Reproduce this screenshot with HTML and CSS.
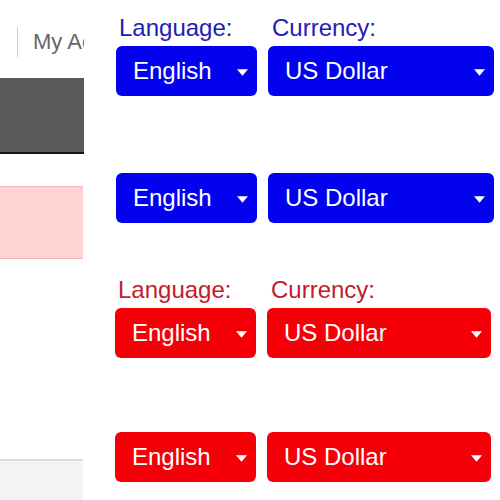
FILE: index.html
```html
<!DOCTYPE html>
<html lang="en">
<head>
    <meta charset="UTF-8">
    <meta name="viewport" content="width=device-width, initial-scale=1.0">
    <title>Language and Currency</title>
    <link rel="stylesheet" href="styles.css">
</head>
<body>

    <div class="sidebar">
        <div class="sidebar-header">
            <span class="divider"></span>
            <span class="account">My Account</span>
        </div>
        <div class="banner"></div>
        <div class="alert"></div>
        <div class="footer"></div>
    </div>

    <div class="settings">
        <!-- Blue theme, with labels -->
        <div class="group theme-blue">
            <div class="row labels">
                <span class="label">Language:</span>
                <span class="label">Currency:</span>
            </div>
            <div class="row">
                <div class="select lang"><span>English</span><svg class="arrow" viewBox="0 0 10 6"><polygon points="0,0 10,0 5,6"/></svg></div>
                <div class="select curr"><span>US Dollar</span><svg class="arrow" viewBox="0 0 10 6"><polygon points="0,0 10,0 5,6"/></svg></div>
            </div>
        </div>

        <!-- Blue theme, no labels -->
        <div class="group theme-blue no-labels">
            <div class="row">
                <div class="select lang"><span>English</span><svg class="arrow" viewBox="0 0 10 6"><polygon points="0,0 10,0 5,6"/></svg></div>
                <div class="select curr"><span>US Dollar</span><svg class="arrow" viewBox="0 0 10 6"><polygon points="0,0 10,0 5,6"/></svg></div>
            </div>
        </div>

        <!-- Red theme, with labels -->
        <div class="group theme-red with-labels">
            <div class="row labels">
                <span class="label">Language:</span>
                <span class="label">Currency:</span>
            </div>
            <div class="row">
                <div class="select lang"><span>English</span><svg class="arrow" viewBox="0 0 10 6"><polygon points="0,0 10,0 5,6"/></svg></div>
                <div class="select curr"><span>US Dollar</span><svg class="arrow" viewBox="0 0 10 6"><polygon points="0,0 10,0 5,6"/></svg></div>
            </div>
        </div>

        <!-- Red theme, no labels -->
        <div class="group theme-red no-labels last">
            <div class="row">
                <div class="select lang"><span>English</span><svg class="arrow" viewBox="0 0 10 6"><polygon points="0,0 10,0 5,6"/></svg></div>
                <div class="select curr"><span>US Dollar</span><svg class="arrow" viewBox="0 0 10 6"><polygon points="0,0 10,0 5,6"/></svg></div>
            </div>
        </div>
    </div>

</body>
</html>
```

FILE: styles.css
```css
body {
    font-family: "Liberation Sans", Arial, sans-serif;
    background-color: #ffffff;
    margin: 0;
    display: flex;
    height: 500px;
    overflow: hidden;
}
.sidebar {
    width: 84px;
    flex-shrink: 0;
    display: flex;
    flex-direction: column;
    overflow: hidden;
}
.sidebar-header {
    height: 78px;
    box-sizing: border-box;
    padding: 27px 0 0 17px;
    display: flex;
    align-items: flex-start;
}
.divider {
    width: 1px;
    height: 30px;
    background-color: #cccccc;
    flex-shrink: 0;
}
.account {
    flex: 1;
    min-width: 0;
    overflow: hidden;
    font-size: 22px;
    line-height: 30px;
    color: #666666;
    margin-left: 15px;
    white-space: nowrap;
}
.banner {
    height: 74px;
    background-color: #5a5a5a;
    border-bottom: 2px solid #141414;
}
.alert {
    margin-top: 32px;
    margin-right: 1px;
    height: 71px;
    background-color: #ffd2d4;
    border-top: 1px solid #f3b6ba;
    border-bottom: 1px solid #f3b6ba;
}
.footer {
    margin-top: auto;
    margin-right: 1px;
    height: 39px;
    background-color: #f3f3f3;
    border-top: 2px solid #dddddd;
}
.settings {
    padding: 16px 0 0 32px;
    display: flex;
    flex-direction: column;
}
.group.no-labels {
    margin-top: 77px;
}
.group.with-labels {
    margin-top: 55px;
}
.group.last {
    margin-top: 74px;
}
.row {
    display: grid;
    grid-template-columns: 141px 226px;
    column-gap: 11px;
}
.labels {
    height: 24px;
    margin-bottom: 6px;
}
.label {
    font-size: 24px;
    line-height: 24px;
    padding-left: 3px;
    white-space: nowrap;
}
.label + .label {
    padding-left: 4px;
}
.select {
    height: 50px;
    border-radius: 6px;
    box-sizing: border-box;
    padding: 0 9px 0 17px;
    display: flex;
    align-items: center;
    justify-content: space-between;
    color: #ffffff;
    font-size: 24px;
}
.arrow {
    width: 11px;
    height: 7px;
    fill: #ffffff;
    margin-top: 3px;
}
.theme-blue .label {
    color: #2020b4;
}
.theme-blue .select {
    background-color: #0202ee;
}
.theme-red {
    margin-left: -1px;
}
.theme-red .label {
    color: #c41a2c;
}
.theme-red .select {
    background-color: #f50008;
}
.theme-red .curr {
    width: 224px;
}
```
